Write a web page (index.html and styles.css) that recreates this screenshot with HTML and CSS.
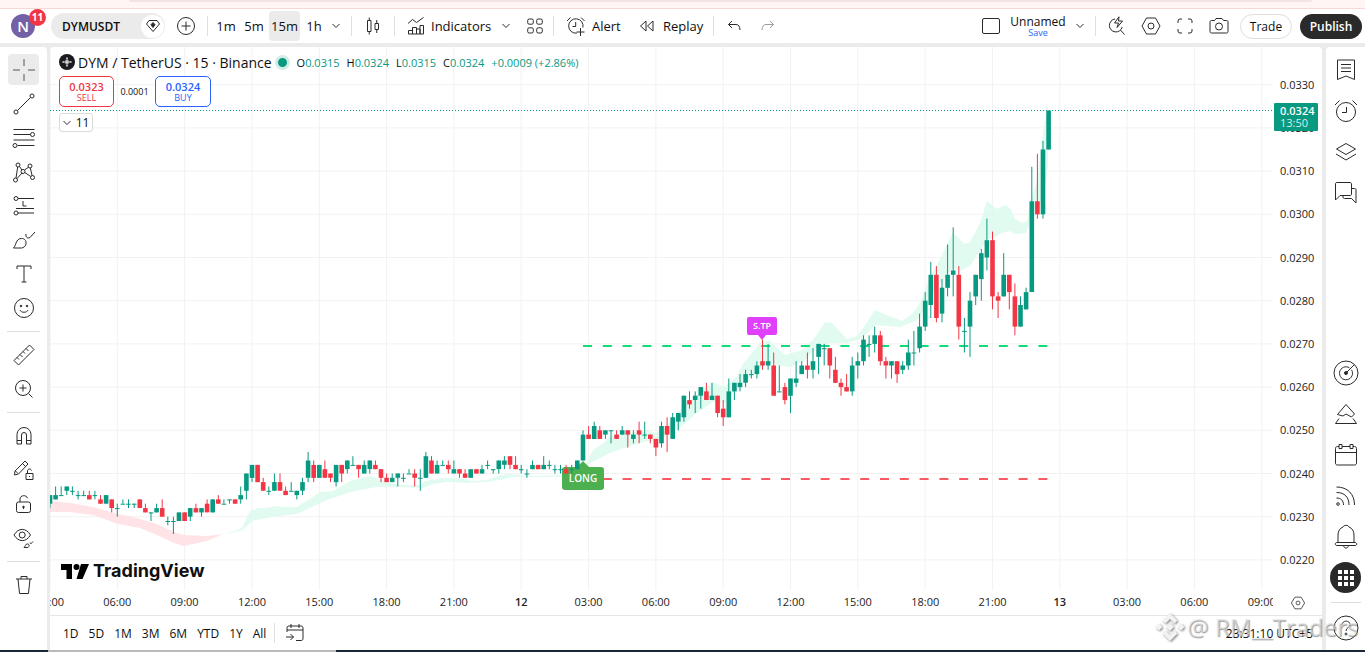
FILE: index.html
```html
<!DOCTYPE html>
<html lang="en">
<head>
<meta charset="utf-8">
<title>DYMUSDT 0.0324 — TradingView</title>
<link rel="stylesheet" href="styles.css">
</head>
<body>
<div class="app">
  <div class="browser-edge"><div class="browser-edge-shade"></div></div>

  <header class="topbar">
    <button class="avatar-btn" aria-label="Account"><span class="avatar">N</span><span class="badge">11</span></button>
    <div class="symbol-pill">
      <button class="symbol-btn">DYMUSDT</button>
      <button class="gem-btn" aria-label="Symbol details"><svg class="icon" width="16" height="14" viewBox="0 0 16 14"><path d="M4 1.500h8l2.500 3.500L8 12.500 1.500 5z"/><path class="solid" d="M8 3.500l2 2.200L8 8.500 6 5.700z"/></svg></button>
    </div>
    <button class="tool w42" aria-label="Compare"><svg class="icon" width="20" height="20" viewBox="0 0 20 20"><circle cx="10" cy="10" r="8.500"/><path d="M10 5.500v9M5.500 10h9"/></svg></button>
    <i class="sep"></i>
    <nav class="intervals" aria-label="Interval">
      <button class="tf">1m</button><button class="tf">5m</button><button class="tf active">15m</button><button class="tf">1h</button>
    </nav>
    <button class="tool w16" aria-label="More intervals"><svg class="icon" width="8" height="6" viewBox="0 0 8 6"><path d="M.5 1L4 4.500 7.500 1"/></svg></button>
    <i class="sep sep-after-tf"></i>
    <button class="tool w42" aria-label="Chart type"><svg class="icon" width="16" height="20" viewBox="0 0 16 20"><path d="M2.500 4.500h3.500v11H2.500zM4.250 1.500v3M4.250 15.500v3M10 7.500h3.500v6H10zM11.750 4v3.500M11.750 13.500V17"/></svg></button>
    <i class="sep"></i>
    <button class="tool labelled indicators"><svg class="icon" width="18" height="20" viewBox="0 0 18 20"><path d="M1 7.500l4.500-4 4 3L16.500 1.500M1.500 18v-3.500h4V18M5.500 18v-6.500h4V18M9.500 18v-5h3.500v5M13 18V9.500h3.500V18zM1.500 18H13"/></svg><span>Indicators</span></button>
    <button class="tool w22" aria-label="Favourite indicators"><svg class="icon" width="8" height="6" viewBox="0 0 8 6"><path d="M.5 1L4 4.500 7.500 1"/></svg></button>
    <button class="tool w36" aria-label="Templates"><svg class="icon" width="16" height="16" viewBox="0 0 16 16"><rect x=".7" y="1" width="5.600" height="5.200" rx="1.500"/><rect x="9.700" y="1" width="5.600" height="5.200" rx="1.500"/><rect x=".7" y="9.800" width="5.600" height="5.200" rx="1.500"/><rect x="9.700" y="9.800" width="5.600" height="5.200" rx="1.500"/></svg></button>
    <i class="sep"></i>
    <button class="tool labelled alert"><svg class="icon" width="20" height="20" viewBox="0 0 20 20"><path d="M16.900 11.500a7.200 7.200 0 1 0-6 5.600M9.700 6v4.500H6.500M1 5l3.500-3.500M15 1.500L18.500 5M14.500 12v8M10.500 16h8"/></svg><span>Alert</span></button>
    <button class="tool labelled replay"><svg class="icon" width="16" height="14" viewBox="0 0 16 14"><path d="M7 2v10L1.500 7zM14 2v10L8.500 7z"/></svg><span>Replay</span></button>
    <i class="sep"></i>
    <button class="tool w40" aria-label="Undo"><svg class="icon" width="14" height="12" viewBox="0 0 14 12"><path d="M5 1L1.500 4.500 5 8M1.500 4.500H9c2.500 0 4 2 4 5.500"/></svg></button>
    <button class="tool w28 faded" aria-label="Redo"><svg class="icon" width="14" height="12" viewBox="0 0 14 12"><path d="M9 1l3.500 3.500L9 8M12.500 4.500H5c-2.500 0-4 2-4 5.500"/></svg></button>

    <div class="topbar-right">
      <button class="tool w30" aria-label="Layout setup"><svg class="icon" width="18" height="18" viewBox="0 0 18 18"><rect x=".5" y="1.500" width="17" height="15" rx="1.500"/></svg></button>
      <button class="layout-name"><span>Unnamed</span><span class="save">Save</span></button>
      <button class="tool w20" aria-label="Manage layouts"><svg class="icon" width="8" height="6" viewBox="0 0 8 6"><path d="M.5 1L4 4.500 7.500 1"/></svg></button>
      <i class="sep sep-layout"></i>
      <button class="tool w34" aria-label="Quick search"><svg class="icon" width="20" height="20" viewBox="0 0 20 20"><path d="M8 3a6.500 6.500 0 1 0 7.200 8M13.500 14l4 4.500M12 .8L7.500 7h4l-1.500 4.500L15.500 5h-4z"/></svg></button>
      <button class="tool w34" aria-label="Settings"><svg class="icon" width="20" height="20" viewBox="0 0 20 20"><path d="M5.500 2h9l4.500 8-4.500 8h-9L1 10z"/><circle cx="10" cy="10" r="3"/></svg></button>
      <button class="tool w34" aria-label="Fullscreen"><svg class="icon" width="16" height="16" viewBox="0 0 16 16"><path d="M5 1H3a2 2 0 0 0-2 2v2M11 1h2a2 2 0 0 1 2 2v2M5 15H3a2 2 0 0 1-2-2v-2M11 15h2a2 2 0 0 0 2-2v-2"/></svg></button>
      <button class="tool w34" aria-label="Snapshot"><svg class="icon" width="20" height="18" viewBox="0 0 20 18"><path d="M2.500 3.500h3L7 1.500h6l1.500 2h3c1 0 1.500.6 1.500 1.500v9.500c0 1-.6 1.500-1.500 1.500h-15C1.600 16 1 15.500 1 14.500V5c0-.9.6-1.500 1.500-1.500z"/><circle cx="10" cy="9.500" r="3.500"/></svg></button>
      <button class="trade">Trade</button>
      <button class="publish">Publish</button>
    </div>
  </header>

  <div class="workspace">
    <aside class="drawbar" aria-label="Drawing tools">
      <button class="draw selected" aria-label="Cross"><svg class="icon" width="22" height="22" viewBox="0 0 22 22"><path d="M11 0v7M11 15v7M0 11h7M15 11h7"/></svg></button>
      <button class="draw" aria-label="Trend line"><svg class="icon" width="22" height="22" viewBox="0 0 22 22"><circle cx="3" cy="19" r="2"/><circle cx="19" cy="3" r="2"/><path d="M4.500 17.500l13-13"/></svg></button>
      <button class="draw" aria-label="Fib retracement"><svg class="icon" width="24" height="22" viewBox="0 0 24 22"><path d="M1.500 2.500h21M1.500 7.500h17M1.500 13h21M5.500 18.500h17"/><circle cx="20.500" cy="7.500" r="2"/><circle cx="3" cy="18.500" r="2"/></svg></button>
      <button class="draw" aria-label="Patterns"><svg class="icon" width="22" height="22" viewBox="0 0 22 22"><circle cx="5" cy="4" r="2"/><circle cx="17" cy="5" r="2"/><circle cx="10" cy="10.500" r="2"/><circle cx="2.500" cy="19" r="2"/><circle cx="19.500" cy="16.500" r="2"/><path d="M4.700 6L3 17M6.500 5.500l2.500 3.500M11.500 9l4-2.800M17.300 7l1.800 7.500M4 17.500l5-5.500M11.800 11.500l6 4"/></svg></button>
      <button class="draw" aria-label="Forecasting"><svg class="icon" width="22" height="22" viewBox="0 0 22 22"><circle cx="3" cy="3.500" r="2"/><circle cx="3" cy="18" r="2"/><path d="M5 3.500h16M3 13.500h18M5 18h16M10 6v5h3.500"/></svg></button>
      <button class="draw" aria-label="Brush"><svg class="icon" width="24" height="20" viewBox="0 0 24 20"><path d="M1.500 18c2-2 2-4.500 3.500-7 2-3.200 6.500-3.500 8.500-.5 1.500 3 0 7-4 7.500zM14 4c-.5 3 1.500 5 4 3.500l5-5.500"/></svg></button>
      <button class="draw" aria-label="Text"><svg class="icon" width="18" height="20" viewBox="0 0 18 20"><path d="M2 5V2h14v3M9 2v16M6.500 18h5"/></svg></button>
      <button class="draw" aria-label="Icons"><svg class="icon" width="22" height="22" viewBox="0 0 22 22"><circle cx="11" cy="11" r="9.500"/><path d="M7 13c1 3 7 3 8 0"/><circle class="solid" cx="8" cy="9" r=".8"/><circle class="solid" cx="14" cy="9" r=".8"/></svg></button>
      <hr>
      <button class="draw" aria-label="Measure"><svg class="icon" width="24" height="24" viewBox="0 0 24 24"><path d="M2 17.500L17.500 2l4.500 4.500L6.500 22zM5 14.500l2 2M8 11.500l2.500 2.500M11 8.500l2 2M14 5.500l2.500 2.500"/></svg></button>
      <button class="draw" aria-label="Zoom in"><svg class="icon" width="20" height="20" viewBox="0 0 20 20"><circle cx="9" cy="9" r="7.500"/><path d="M14.500 14.500l4 4M9 5.500v7M5.500 9h7"/></svg></button>
      <hr>
      <button class="draw" aria-label="Magnet"><svg class="icon" width="18" height="20" viewBox="0 0 18 20"><path d="M2 18V8.500a7 7 0 0 1 14 0V18h-4.500V9a2.500 2.500 0 0 0-5 0v9zM2 14.500h4.500M11.500 14.500H16"/></svg></button>
      <button class="draw" aria-label="Keep drawing"><svg class="icon" width="22" height="22" viewBox="0 0 22 22"><path d="M2 12L12 2l3 3L5.500 15 1.500 16zM9.500 4.500l3 3M2.500 12l2.500 2.500M13 14.500h7v6h-7zM14.500 14.500V12c0-2.500 3.500-2.500 4-.5"/><path d="M16.500 17v1"/></svg></button>
      <button class="draw" aria-label="Lock drawings"><svg class="icon" width="18" height="20" viewBox="0 0 18 20"><rect x="1.500" y="8" width="14" height="10.500" rx="2"/><path d="M5 8V5c0-4 6.500-4.500 7.500-.8M8.500 12.500v2.500"/><circle class="solid" cx="8.500" cy="13" r=".8"/></svg></button>
      <button class="draw" aria-label="Hide drawings"><svg class="icon" width="22" height="22" viewBox="0 0 22 22"><path d="M1 8c4.500-7.500 12-7.500 16.500 0C13 15.500 5.500 15.500 1 8z"/><circle cx="9.200" cy="8" r="3"/><path d="M11 20.500c1.500-1 1-3 3-3.500s3 2 1 3.500zM17 15.500c0 1.500 1.500 1.500 3-1"/></svg></button>
      <hr>
      <button class="draw" aria-label="Remove"><svg class="icon" width="18" height="20" viewBox="0 0 18 20"><path d="M1 4h16M3 4l1.500 14.500h9L15 4M6 4V1.500h6V4"/></svg></button>
    </aside>

    <main class="chart">
      <div class="plot-row">
        <div class="plot">
          <svg class="plot-svg" id="plot" role="img" aria-label="DYMUSDT 15 minute candles"></svg>
          <section class="legend">
            <div class="legend-title">
              <svg width="16" height="16" viewBox="0 0 16 16"><circle cx="8" cy="8" r="8" fill="#1b1b1f"/><path d="M8 3.500v9M3.500 8h9" stroke="#bdbdbd" stroke-width="2"/><path d="M8 4.500L11.500 8 8 11.500 4.500 8z" fill="#777"/><path d="M8 6v4M6 8h4" stroke="#eee"/></svg>
              <h1>DYM / TetherUS · 15 · Binance</h1>
              <span class="market-dot"></span>
              <p class="ohlc"><span>O<b>0.0315</b></span><span>H<b>0.0324</b></span><span>L<b>0.0315</b></span><span>C<b>0.0324</b></span><b>+0.0009 (+2.86%)</b></p>
            </div>
            <div class="quote-row">
              <button class="quote sell"><strong>0.0323</strong><span>SELL</span></button>
              <span class="spread">0.0001</span>
              <button class="quote buy"><strong>0.0324</strong><span>BUY</span></button>
            </div>
            <button class="collapse"><svg class="icon" width="8" height="6" viewBox="0 0 8 6"><path d="M.5 1L4 4.500 7.500 1"/></svg>11</button>
          </section>
          <div class="brand"><svg width="28" height="15" viewBox="0 0 28 15"><path d="M0 0h11v15H5.500V6H0zM20 0h8l-6.500 15h-6z"/><circle cx="15.500" cy="3" r="3"/></svg>TradingView</div>
        </div>
        <svg class="price-axis" id="prices" role="img" aria-label="Price scale"></svg>
      </div>
      <div class="time-row">
        <svg class="time-axis" id="times" role="img" aria-label="Time scale"></svg>
        <button class="axis-settings" aria-label="Scale settings"><svg class="icon" width="16" height="14" viewBox="0 0 20 18"><path d="M6 1.500h8L18.500 9 14 16.500H6L1.500 9z"/><circle cx="10" cy="9" r="2.500"/></svg></button>
      </div>
      <footer class="rangebar">
        <button>1D</button><button>5D</button><button>1M</button><button>3M</button><button>6M</button><button>YTD</button><button>1Y</button><button>All</button>
        <i class="sep"></i>
        <button class="goto" aria-label="Go to date"><svg class="icon" width="20" height="20" viewBox="0 0 20 20"><path d="M2 9V5c0-1.300.7-2 2-2h12c1.300 0 2 .7 2 2v10.500c0 1.300-.7 2-2 2h-5M2 7h16M6 1v4M14 1v4M1 14h7.500M5.500 11l3 3-3 3"/></svg></button>
        <button class="clock">23:31:10 UTC+5</button>
      </footer>
    </main>

    <aside class="widgetbar" aria-label="Widgets">
      <div>
        <button aria-label="Watchlist"><svg class="icon" width="20" height="22" viewBox="0 0 20 22"><path d="M1.500 1h17v19.500L10 17l-8.500 3.500zM5 5.500h10M5 9h10M5 12.500h10"/></svg></button>
        <button aria-label="Alerts"><svg class="icon" width="24" height="24" viewBox="0 0 24 24"><circle cx="12" cy="13" r="9.500"/><path d="M12.500 8v5.500H8M1 6l4.500-4.500M18.500 1.500L23 6"/></svg></button>
        <button aria-label="Object tree"><svg class="icon" width="22" height="20" viewBox="0 0 22 20"><path d="M11 1.500L20.500 7 11 12.500 1.500 7zM1 12l10 6 10-6"/></svg></button>
        <button aria-label="Chats"><svg class="icon" width="24" height="24" viewBox="0 0 24 24"><path d="M1.500 19V3c0-1 .5-1.500 1.500-1.500h13c1 0 1.500.5 1.500 1.500v10c0 1-.5 1.500-1.500 1.500H6zM9 14.500V16c0 1 .5 1.500 1.500 1.500h7l4.500 4.500V9c0-1-.5-1.500-1.500-1.500h-3"/></svg></button>
      </div>
      <div>
        <button aria-label="Screener"><svg class="icon" width="26" height="26" viewBox="0 0 26 26"><circle cx="13" cy="13" r="12"/><path d="M16.500 7.800a6.500 6.500 0 1 0 2 2M13 13l8.500-8.500"/><circle class="solid" cx="13" cy="13" r="1.500"/></svg></button>
        <button aria-label="Pine"><svg class="icon" width="24" height="22" viewBox="0 0 24 22"><path d="M12 1.500l8.500 9.500-3 3-5.500-3-3 2-5.500-1.500zM5 15.500L1.500 20.500h21L19 15.500"/></svg></button>
        <button aria-label="Calendar"><svg class="icon" width="24" height="24" viewBox="0 0 24 24"><path d="M5 3.500H3.500c-1.300 0-2 .7-2 2V20c0 1.300.7 2 2 2h17c1.300 0 2-.7 2-2V5.500c0-1.300-.7-2-2-2H19M8 3.500h8M1.500 9.500h21M5 1.500h3v4H5zM16 1.500h3v4h-3z"/></svg></button>
        <button aria-label="News"><svg class="icon" width="22" height="22" viewBox="0 0 22 22"><circle cx="3" cy="19" r="1.300"/><path d="M1.500 13c4.500 0 7 2.500 7 7M1.500 7.500c8 0 12.500 4.500 12.500 12.500M1.500 2c11 0 18 7 18 18"/></svg></button>
        <button aria-label="Notifications"><svg class="icon" width="24" height="26" viewBox="0 0 24 26"><path d="M4 18.500V11c0-4 2-7 5-8 .8-2.200 5.200-2.200 6 0 3 1 5 4 5 8v7.500M3 18.500h18c2.300 0 2.300 3 0 3H3c-2.300 0-2.300-3 0-3zM9.500 21.500c.5 3.500 4.500 3.500 5 0"/></svg></button>
        <button aria-label="Products"><span class="dots"><svg width="18" height="18" viewBox="0 0 18 18"><path d="M1 1h4v4H1zM7 1h4v4H7zM13 1h4v4h-4zM1 7h4v4H1zM7 7h4v4H7zM13 7h4v4h-4zM1 13h4v4H1zM7 13h4v4H7zM13 13h4v4h-4z" fill="#fff"/></svg></span></button>
        <hr>
        <button aria-label="Help"><svg class="icon" width="26" height="26" viewBox="0 0 26 26"><circle cx="13" cy="13" r="12"/><path d="M9 10c0-5 8-5 8-.5 0 3-4 3-4 6.500"/><circle cx="13" cy="19" r="1"/></svg></button>
      </div>
    </aside>
  </div>

  <div class="taskbar"><i class="taskbar-dark"></i><i class="taskbar-light"></i><i class="taskbar-rest"></i></div>

  <div class="watermark">
    <svg width="30" height="30" viewBox="0 0 30 30"><path d="M15 1l7.500 7.500-3 3L15 7l-4.500 4.500-3-3zM15 29l7.500-7.500-3-3L15 23l-4.500-4.500-3 3zM4 11.500L7.500 15 4 18.500.5 15zM26 11.500l3.500 3.500-3.500 3.500-3.500-3.500zM15 11l4 4-4 4-4-4z"/></svg>
    <span>@ RM__Traders</span>
  </div>
</div>
<script src="chart.js"></script>
</body>
</html>
```

FILE: styles.css
```css
* { box-sizing: border-box; }

body {
  margin: 0;
  font-family: "Open Sans", "Noto Sans", sans-serif;
  font-size: 12px;
  color: #0f0f0f;
}

button {
  font: inherit;
  color: inherit;
  background: none;
  border: 0;
  padding: 0;
  display: flex;
  align-items: center;
  justify-content: center;
  flex: none;
}

hr { border: 0; border-top: 1px solid #dedede; width: 33px; margin: 6px auto; }

.icon { fill: none; stroke: #2a2a2a; stroke-width: 1; flex: none; display: block; }
.icon .solid { fill: #2a2a2a; }

.app {
  position: relative;
  display: flex;
  flex-direction: column;
  height: 100vh;
  overflow: hidden;
  background: #ebebeb;
}

.browser-edge { height: 9px; flex: none; background: #fff5f5; border-bottom: 1px solid #f6d8d8; }
.browser-edge-shade { height: 2px; margin: 0 53px 0 129px; background: #f2e3e6; border-radius: 0 0 4px 4px; }

/* top toolbar */
.topbar { display: flex; align-items: center; height: 34px; flex: none; background: #fff; padding-right: 3px; font-size: 13px; }
.avatar-btn { position: relative; width: 46px; height: 34px; }
.avatar { width: 24px; height: 24px; border-radius: 50%; background: #7460a5; color: #fff; font-size: 15px; line-height: 24px; font-weight: 600; }
.badge { position: absolute; left: 29px; top: 0; width: 17px; height: 17px; border-radius: 50%; background: #f23645; color: #fff; font-size: 10px; line-height: 17px; font-weight: 700; }
.symbol-pill { display: flex; align-items: center; justify-content: space-between; width: 114px; height: 26px; margin-left: 5px; padding: 1px 1px 1px 11px; border-radius: 13px; background: #ebebeb; }
.symbol-btn { font-size: 12px; font-weight: 600; }
.gem-btn { width: 23px; height: 23px; border-radius: 50%; background: #fff; }
.tool { height: 34px; }
.w16 { width: 16px; } .w20 { width: 20px; } .w22 { width: 22px; } .w28 { width: 28px; }
.w30 { width: 30px; } .w34 { width: 34px; } .w36 { width: 36px; } .w40 { width: 40px; } .w42 { width: 42px; }
.faded { opacity: .45; }
.sep { width: 1px; height: 20px; flex: none; background: #e0e0e0; }
.sep-after-tf { margin-left: 7px; }
.intervals { display: flex; margin-left: 4px; }
.tf { width: 28px; height: 30px; }
.tf.active { width: 31px; margin-left: 1px; background: #ebebeb; border-radius: 4px; }
.labelled { justify-content: flex-start; }
.indicators { width: 100px; padding-left: 12px; gap: 6px; }
.alert { width: 76px; padding-left: 12px; gap: 6px; }
.replay { width: 83px; padding-left: 9px; gap: 8px; }
.topbar-right { display: flex; align-items: center; margin-left: auto; }
.layout-name { flex-direction: column; width: 64px; font-size: 12px; line-height: 13px; }
.save { font-size: 9px; line-height: 9px; color: #2962ff; }
.sep-layout { margin: 0 4px 0 5px; }
.trade { width: 52px; height: 25px; margin: 0 8px 0 4px; border: 1px solid #dedede; border-radius: 13px; font-size: 12px; }
.publish { width: 62px; height: 25px; border-radius: 13px; background: #2a2a2a; color: #fff; font-size: 12px; font-weight: 600; }

/* body columns */
.workspace { display: flex; flex: 1; min-height: 0; gap: 3px; padding-top: 4px; }
.drawbar { width: 47px; flex: none; background: #fff; padding-top: 6px; border-radius: 0 4px 0 0; }
.draw { width: 31px; height: 34px; margin: 0 auto; }
.draw.selected { height: 31px; margin: 1px auto 2px; background: #ebebeb; border-radius: 4px; }
.draw.selected .icon { stroke: #555; }
.widgetbar { display: flex; flex-direction: column; justify-content: space-between; width: 39px; flex: none; margin-left: 1px; background: #fff; padding: 2px 0; border-radius: 4px 0 0 0; }
.widgetbar button { width: 39px; height: 41px; }
.widgetbar hr { width: 30px; margin: 4px auto; }
.dots { display: flex; align-items: center; justify-content: center; width: 31px; height: 31px; border-radius: 50%; background: #2a2a2a; }

/* chart */
.chart { flex: 1; min-width: 0; display: flex; flex-direction: column; background: #fff; border-radius: 4px 4px 0 0; }
.plot-row { flex: 1; display: flex; min-height: 0; }
.plot { position: relative; flex: 1; min-width: 0; }
.plot-svg { display: block; width: 100%; height: 100%; }
.price-axis { width: 49px; height: 100%; flex: none; }
.time-row { display: flex; height: 25px; flex: none; }
.time-axis { flex: 1; min-width: 0; height: 25px; }
.axis-settings { width: 49px; height: 25px; }
.axis-label { font-family: "Open Sans", sans-serif; font-size: 11px; fill: #222; }
.axis-major { font-weight: 600; }
.tag-price { font-size: 11px; font-weight: 600; fill: #fff; }
.tag-time { font-size: 11px; fill: #d5efea; }
.grid { stroke: #f2f2f2; stroke-width: 1; }
.up { fill: #089981; stroke: #089981; }
.down { fill: #f23645; stroke: #f23645; }
.bull-band { fill: #dffbee; fill-opacity: .9; }
.bear-band { fill: #ffe0e3; fill-opacity: .9; }
.marker-text { font-family: "Open Sans", sans-serif; fill: #fff; text-anchor: middle; font-weight: 600; }

.legend { position: absolute; left: 9px; top: 5px; display: flex; flex-direction: column; align-items: flex-start; }
.legend-title { display: flex; align-items: center; height: 20px; }
.legend h1 { margin: 0 3px; font-size: 14px; font-weight: 400; white-space: nowrap; }
.market-dot { width: 15px; height: 15px; border: 3px solid #d0eee6; border-radius: 50%; background: #089981; }
.ohlc { display: flex; gap: 7px; margin: 0 0 0 7px; font-size: 11px; white-space: nowrap; }
.ohlc b { font-weight: 400; color: #089981; }
.quote-row { display: flex; align-items: center; margin-top: 4px; }
.quote { flex-direction: column; width: 55px; height: 31px; border: 1px solid; border-radius: 5px; background: #fff; line-height: 12px; }
.quote strong { font-size: 11px; font-weight: 600; }
.quote span { font-size: 9px; line-height: 10px; }
.sell { color: #f23645; }
.buy { width: 56px; color: #2962ff; }
.spread { width: 41px; font-size: 9px; line-height: 12px; text-align: center; }
.collapse { gap: 5px; width: 34px; height: 19px; margin-top: 6px; border: 1px solid #dcdcdc; border-radius: 3px; background: #fff; }
.brand { position: absolute; left: 11px; bottom: 7px; display: flex; align-items: center; gap: 4px; font: 700 18px/24px Inter, "Open Sans", sans-serif; color: #0f0f0f; }

.rangebar { display: flex; align-items: center; gap: 10px; height: 35px; flex: none; padding: 0 9px 0 13px; border-top: 1px solid #e6e6e6; }
.rangebar .sep { margin-left: -2px; }
.clock { margin-left: auto; }

.taskbar { display: flex; height: 2px; flex: none; }
.taskbar-dark { width: 48px; background: #1b2538; }
.taskbar-light { width: 288px; background: #b9b9b9; }
.taskbar-rest { flex: 1; background: #1b2538; }

.watermark { position: absolute; right: 7px; bottom: 9px; display: flex; align-items: center; gap: 2px; font-size: 24px; line-height: 32px; color: rgba(228, 228, 228, .6); text-shadow: 1px 1px 1px rgba(90, 90, 90, .6); pointer-events: none; }
.watermark svg { fill: #f2f2f2; filter: drop-shadow(1px 1px 1px rgba(70, 70, 70, .7)); }
```

FILE: chart.js
```js
// Candles as [open, high, low, close] in ticks of 0.0001, one per 15 minutes from 03:00.
const candles = [
[233,235,232,235],[234,237,234,235],[235,237,235,235],[236,237,235,237],[236,237,235,236],[235,236,234,235],[235,236,235,235],[235,236,234,234],[235,236,234,235],[234,235,233,233],
[233,235,233,235],[234,234,231,232],[232,233,230,232],[233,234,233,233],[233,234,232,233],[233,233,232,233],[234,234,232,232],[232,233,231,231],[231,231,229,231],[231,233,231,232],
[232,234,230,230],[229,230,228,229],[229,230,226,229],[229,231,229,231],[231,231,229,229],[230,232,229,232],[232,233,231,231],[231,232,230,232],[233,234,231,231],[231,234,231,234],
[234,235,233,233],[233,234,233,233],[234,234,233,234],[234,234,233,233],[234,237,233,235],[236,240,234,240],[239,242,238,242],[242,242,238,238],[238,239,236,236],[236,237,235,236],
[236,240,236,238],[238,240,236,236],[236,237,235,235],[236,238,236,236],[235,236,234,236],[236,239,235,238],[239,245,238,243],[242,243,238,239],[239,242,239,242],[241,243,239,239],
[240,240,238,239],[238,242,237,242],[242,242,238,240],[241,243,240,243],[242,244,242,242],[242,242,239,241],[240,243,240,242],[241,243,240,243],[242,243,241,241],[241,241,238,239],
[239,240,238,238],[238,240,238,239],[239,240,237,240],[239,240,238,239],[240,241,240,240],[240,241,237,239],[239,241,236,239],[239,245,239,244],[243,244,240,240],[240,243,240,242],
[242,243,242,242],[242,243,240,241],[240,243,240,241],[241,241,239,240],[240,241,239,239],[239,241,239,241],[241,241,240,240],[240,242,240,241],[242,243,241,242],[241,241,240,241],
[241,243,240,243],[242,244,241,243],[244,244,241,242],[242,244,241,241],[241,242,240,241],[240,241,239,240],[241,243,241,242],[242,242,241,241],[241,244,241,242],[242,243,241,242],
[241,242,240,241],[241,242,240,241],[241,242,240,240],[241,242,240,241],[241,243,241,243],[243,250,243,249],[249,251,248,248],[248,252,248,251],[250,251,248,248],[249,250,248,250],
[250,250,247,250],[249,250,248,248],[249,251,249,250],[250,250,246,249],[248,250,247,249],[250,252,247,249],[249,252,248,249],[249,249,247,248],[248,248,244,246],[247,252,246,251],
[251,253,245,249],[248,254,248,253],[252,254,250,254],[253,258,252,258],[257,259,255,256],[257,259,254,258],[258,260,255,260],[259,261,257,257],[257,261,257,258],[258,258,253,254],
[255,257,251,253],[253,262,253,259],[259,261,257,261],[260,263,259,261],[261,264,260,263],[263,264,262,263],[263,266,262,265],[266,271,264,265],[265,270,264,266],[265,268,258,258],
[259,265,259,259],[260,261,256,257],[258,262,254,262],[261,266,260,262],[263,266,263,265],[265,268,262,264],[264,269,262,266],[267,270,263,270],[269,270,265,269],[269,269,262,265],
[264,267,261,261],[261,262,258,260],[260,263,259,259],[259,267,258,265],[265,268,262,266],[266,272,265,271],[270,272,267,270],[270,274,268,272],[272,273,265,266],[266,267,262,265],
[265,266,262,266],[266,266,261,263],[264,266,263,265],[265,271,264,268],[268,273,265,268],[269,277,268,274],[274,282,273,280],[279,289,276,286],[286,288,275,276],[277,285,275,283],
[283,293,281,286],[286,297,281,287],[286,288,271,274],[273,276,268,273],[274,282,267,280],[281,286,279,286],[285,292,280,291],[290,299,287,294],[294,296,278,281],[281,282,276,280],
[281,291,281,286],[286,286,278,282],[281,284,272,274],[274,281,274,279],[278,283,278,282],[282,311,282,303],[303,314,299,300],[300,317,299,315],[315,324,315,324]
];

const STEP = 5.61;
const x = i => i * STEP;
const y = p => 37.7 + (330 - p) * 4.32;
const n = v => v.toFixed(1);

// Trend bands, outlined in workspace coordinates and shifted into the plot.
const bear = "50,501 70,503 93,507 118,514 137,518 157,524 174,532 184,535 207,536 223,534 207,541 184,546 174,543 157,535 140,528 118,524 93,515 70,512 50,512";
const bullA = "225,534 242,528 250,511 258,508 267,508 275,506 283,507 297,507 303,503 310,499 320,492 333,491 350,481 370,476 387,482 400,485 420,485 425,481 443,478 460,478 472,481 487,480 500,475 510,474 533,476 560,475 580,474 580,477 560,477 533,477 513,477 500,480 487,482 467,483 447,482 433,484 423,488 400,487 377,487 350,492 333,498 327,500 310,508 297,514 280,516 267,518 252,521 243,530";
const bullB = "585,466 593,450 605,442 610,436 647,430 655,433 665,428 677,413 697,395 713,382 724,387 737,376 743,364 760,343 769,340 785,355 802,350 813,340 825,322 832,323 847,339 857,336 863,328 875,310 887,315 902,321 913,313 920,303 930,277 937,265 953,232 964,244 970,242 980,223 987,201 997,209 1005,205 1010,208 1015,219 1022,223 1027,221 1030,203 1037,180 1043,133 1048,103 1048,167 1043,197 1030,223 1026,233 1015,234 1009,231 1002,233 993,238 987,240 970,266 960,271 953,268 937,287 927,307 917,320 900,327 875,325 863,338 847,343 830,343 817,347 805,360 790,367 780,366 768,362 758,371 743,383 730,397 724,403 713,402 697,413 683,425 673,432 657,441 647,441 630,446 610,453";

let plot = "";
for (let p = 330; p >= 220; p -= 10) plot += `<line class="grid" x1="0" x2="100%" y1="${n(y(p))}" y2="${n(y(p))}"/>`;
for (let k = 0; k < 40; k++) plot += `<line class="grid" x1="${n(x(k * 12))}" x2="${n(x(k * 12))}" y1="0" y2="100%"/>`;
plot += `<g transform="translate(-50 -47)"><polygon class="bear-band" points="${bear}"/><polygon class="bull-band" points="${bullA}"/><polygon class="bull-band" points="${bullB}"/></g>`;
plot += `<line x1="533" x2="998" y1="299" y2="299" stroke="#10dc78" stroke-width="2" stroke-dasharray="9 10.8"/>`;
plot += `<line x1="533" x2="998" y1="432" y2="432" stroke="#fb5a63" stroke-width="2" stroke-dasharray="9 10.8"/>`;
plot += `<line x1="0" x2="100%" y1="63.500" y2="63.500" stroke="#089981" stroke-width="1" stroke-dasharray="1 2"/>`;
plot += `<path d="M512 423q0-3 3-3h12l6-6 6 6h12q3 0 3 3v17q0 3-3 3h-36q-3 0-3-3z" fill="#4caf50"/>`;
plot += `<path d="M697 272q0-2 2-2h26q2 0 2 2v14q0 2-2 2h-9l-4 5-4-5h-9q-2 0-2-2z" fill="#e040fb"/>`;
candles.forEach(([o, h, l, c], i) => {
  const cx = x(i), top = y(Math.max(o, c)), height = Math.max(1, Math.abs(o - c) * 4.32);
  plot += `<g class="${c >= o ? "up" : "down"}"><path d="M${n(cx)} ${n(y(h))}V${n(y(l))}" fill="none"/><rect x="${n(cx - 2.3)}" y="${n(top)}" width="4.6" height="${n(height)}" stroke="none"/></g>`;
});
plot += `<text class="marker-text" font-size="10" x="533" y="435">LONG</text>`;
plot += `<text class="marker-text" font-size="9" x="712" y="282">S.TP</text>`;
document.getElementById("plot").innerHTML = plot;

let prices = "";
for (let p = 330; p >= 220; p -= 10) prices += `<text class="axis-label" x="7" y="${Math.round(y(p)) + 4}">0.0${p}</text>`;
prices += `<rect x="1" y="56" width="44" height="28" rx="1" fill="#089981"/>`;
prices += `<text class="tag-price" x="7" y="68">0.0324</text><text class="tag-time" x="7" y="80">13:50</text>`;
document.getElementById("prices").innerHTML = prices;

let times = "";
for (let k = 0; k < 19; k++) {
  const hour = (3 + k * 3) % 24;
  const label = hour ? String(hour).padStart(2, "0") + ":00" : String(12 + Math.floor(k / 8));
  times += `<text class="axis-label${hour ? "" : " axis-major"}" text-anchor="middle" x="${n(x(k * 12))}" y="16">${label}</text>`;
}
document.getElementById("times").innerHTML = times;
```
